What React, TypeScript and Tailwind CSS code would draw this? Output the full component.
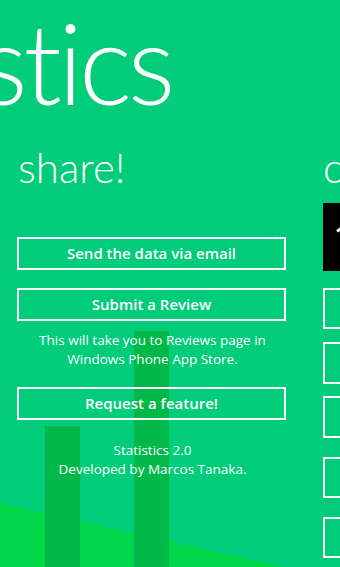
import React from 'react';

const buttons = ['Send the data via email', 'Submit a Review'];

const App: React.FC = () => {
  return (
    <div className="relative w-[340px] h-[567px] overflow-hidden bg-[#00cc7a] text-white" style={{ fontFamily: '"Open Sans", sans-serif' }}>
      {/* background art */}
      <div className="absolute inset-0 bg-[#00d64a] [clip-path:polygon(0_503px,284px_567px,0_567px)]" />
      <div className="absolute left-[45px] top-[426px] w-[35px] h-[141px] bg-[#00b848]" />
      <div className="absolute left-[134px] top-[331px] w-[35px] h-[236px] bg-[#00b848]" />

      <div className="relative flex h-full">
        {/* share panel */}
        <div className="w-[323px] shrink-0">
          <div className="h-[130px] -ml-[20px] pt-[6px] text-[112px] leading-none font-light whitespace-nowrap tracking-[-4px]" style={{ fontFamily: 'Lato, sans-serif' }}>
            stics
          </div>
          <div className="pl-[18px] text-[42px] leading-none font-light h-[107px] pt-[16px]" style={{ fontFamily: 'Lato, sans-serif' }}>
            share!
          </div>
          <div className="pl-[17px] w-[286px] flex flex-col">
            {buttons.map((b) => (
              <button key={b} className="h-[33px] mb-[18px] border-2 border-white text-[15px] font-semibold">
                {b}
              </button>
            ))}
            <p className="-mt-[8px] text-center text-[13.5px] leading-[19px] ml-[2px]">
              This will take you to Reviews page in
              <br />
              Windows Phone App Store.
            </p>
            <button className="mt-[18px] h-[33px] border-2 border-white text-[15px] font-semibold">
              Request a feature!
            </button>
            <p className="mt-[21px] text-center text-[13.5px] leading-[19px] ml-[2px]">
              Statistics 2.0
              <br />
              Developed by Marcos Tanaka.
            </p>
          </div>
        </div>

        {/* next panel peeking in */}
        <div className="w-[40px] shrink-0">
          <div className="h-[203px] pt-[146px] text-[42px] leading-none font-light" style={{ fontFamily: 'Lato, sans-serif' }}>
            c
          </div>
          <div className="h-[68px] bg-black overflow-hidden text-[64px] leading-none font-light pl-[7px] pt-[8px]">1</div>
          <div className="mt-[17px] h-[41px] border-2 border-white" />
          <div className="mt-[13px] h-[42px] border-2 border-white" />
          <div className="mt-[12px] h-[42px] border-2 border-white" />
          <div className="mt-[19px] h-[41px] border-2 border-white" />
          <div className="mt-[19px] h-[41px] border-2 border-white" />
        </div>
      </div>
    </div>
  );
};

export default App;
